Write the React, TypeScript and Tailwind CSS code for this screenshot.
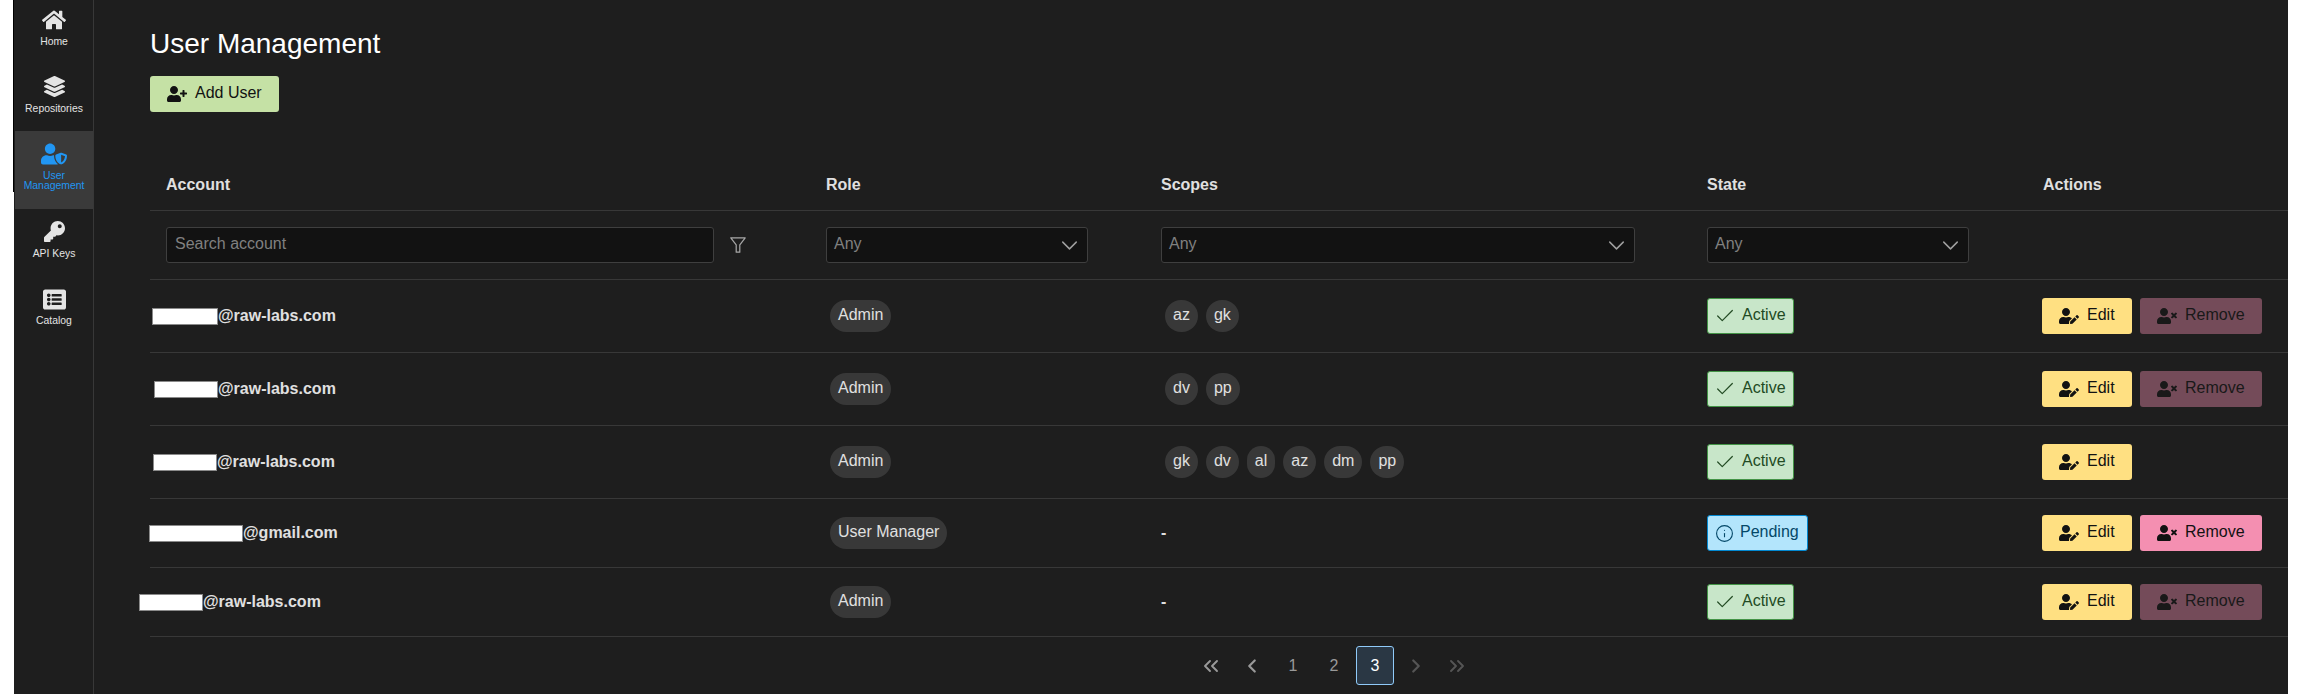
import { Check, ChevronDown, ChevronLeft, ChevronRight, ChevronsLeft, ChevronsRight, Info } from "lucide-react";
import { FaHome, FaKey, FaLayerGroup, FaListAlt, FaUserEdit, FaUserPlus, FaUserShield, FaUserTimes } from "react-icons/fa";

const gridCols = "grid grid-cols-[660px_335px_546px_336px_261px] items-center border-b border-[#383838]";

const users = [
  { mask: "w-[66px] -ml-[14px]", domain: "@raw-labs.com", role: "Admin", scopes: ["az", "gk"], state: "Active", removable: false, tall: true },
  { mask: "w-[64px] -ml-[12px]", domain: "@raw-labs.com", role: "Admin", scopes: ["dv", "pp"], state: "Active", removable: false, tall: true },
  { mask: "w-[64px] -ml-[13px]", domain: "@raw-labs.com", role: "Admin", scopes: ["gk", "dv", "al", "az", "dm", "pp"], state: "Active", removable: null, tall: true },
  { mask: "w-[94px] -ml-[17px]", domain: "@gmail.com", role: "User Manager", scopes: [], state: "Pending", removable: true, tall: false },
  { mask: "w-[64px] -ml-[27px]", domain: "@raw-labs.com", role: "Admin", scopes: [], state: "Active", removable: false, tall: false },
];

const navItems = [
  { label: "Home", icon: <FaHome size={24} /> },
  { label: "Repositories", icon: <FaLayerGroup size={21} /> },
  { label: "User Management", icon: <FaUserShield size={26} />, active: true },
  { label: "API Keys", icon: <FaKey size={21} /> },
  { label: "Catalog", icon: <FaListAlt size={23} className="translate-y-px" /> },
];

const Sidebar = () => (
  <aside className="w-[80px] shrink-0 overflow-hidden border-r border-[#383838] pl-px">
    <div className="-mt-[3px]">
      {navItems.map((item) => (
        <div
          key={item.label}
          className={
            item.active
              ? "flex h-[78px] flex-col items-center bg-[#3a3a3a] pt-3 text-[#2196f3]"
              : "flex h-[67px] flex-col items-center pt-3 text-[#e4e4e4]"
          }
        >
          <div className="flex h-[21px] items-center justify-center">{item.icon}</div>
          <p className="mt-[7px] text-center text-[10.4px] leading-[10px]">{item.label}</p>
        </div>
      ))}
    </div>
  </aside>
);

const Dropdown = ({ width }: { width: string }) => (
  <div className={`flex h-9 items-center justify-between rounded-[3px] border border-[#3f3f3f] bg-[#121212] pl-[7px] pr-[4px] text-[#808080] ${width}`}>
    <span className="-translate-y-px">Any</span>
    <ChevronDown size={27} strokeWidth={1.3} className="text-[#a0a0a0]" />
  </div>
);

const Chip = ({ label }: { label: string }) => (
  <span className="m-1 flex h-8 items-center rounded-full bg-[#383838] px-2 text-[#e0e0e0]">
    <span className="-translate-y-px">{label}</span>
  </span>
);

const StateTag = ({ state }: { state: string }) =>
  state === "Active" ? (
    <div className="flex h-9 w-[87px] items-center gap-[6px] rounded-[3px] border border-[#439446] bg-[#c8e6c9] pl-[6px] text-[#224a23]">
      <Check size={22} strokeWidth={1.3} />
      <span className="-translate-y-px">Active</span>
    </div>
  ) : (
    <div className="flex h-9 w-[101px] items-center gap-[6px] rounded-[3px] border border-[#0288d1] bg-[#b3e5fc] pl-[7px] text-[#044868]">
      <Info size={19} strokeWidth={1.4} />
      <span className="-translate-y-px">Pending</span>
    </div>
  );

const PageButton = ({ children, active }: { children: React.ReactNode; active?: boolean }) => (
  <button
    className={
      active
        ? "flex h-[39px] w-[38px] items-center justify-center rounded-[3px] border border-[#90caf9] bg-[#2a3744] text-white"
        : "flex h-[39px] w-[38px] items-center justify-center text-[#999999]"
    }
  >
    {children}
  </button>
);

export default function App() {
  return (
    <div className="flex h-[694px] w-[2300px] overflow-hidden bg-white font-['Liberation_Sans',sans-serif] text-base text-[#e0e0e0]">
      <div className="w-[14px] shrink-0">
        <div className="ml-auto h-[192px] w-px bg-black" />
      </div>
      <div className="flex w-[2274px] bg-[#1e1e1e]">
        <Sidebar />
        <main className="flex-1 pl-[56px] pt-[27px]">
          <h1 className="text-[28px] leading-[33px] text-white">User Management</h1>
          <button className="mt-4 flex h-9 w-[129px] items-center gap-2 rounded-[3px] bg-[#c5e1a5] pl-[17px] text-[#121212]">
            <FaUserPlus size={20} />
            <span className="-translate-y-px">Add User</span>
          </button>

          <div className="mt-[46px]">
            <div className={`${gridCols} h-[53px] pt-[2px] font-bold`}>
              <div className="pl-4">Account</div>
              <div className="pl-4">Role</div>
              <div className="pl-4">Scopes</div>
              <div className="pl-4">State</div>
              <div className="pl-4">Actions</div>
            </div>

            <div className={`${gridCols} h-[69px]`}>
              <div className="flex items-center pl-4">
                <input
                  placeholder="Search account"
                  className="h-9 w-[548px] rounded-[3px] border border-[#3f3f3f] bg-[#121212] px-2 pb-0.5 text-[#e0e0e0] outline-none placeholder:text-[#808080]"
                />
                <svg viewBox="0 0 16 16" className="ml-4 size-4" fill="none" stroke="#a8a8a8" strokeWidth="1.2">
                  <path d="M0.8 0.8h14.4L9.8 7.8v7.4H6.2V7.8z" strokeLinejoin="round" />
                </svg>
              </div>
              <div className="pl-4"><Dropdown width="w-[262px]" /></div>
              <div className="pl-4"><Dropdown width="w-[474px]" /></div>
              <div className="pl-4"><Dropdown width="w-[262px]" /></div>
              <div />
            </div>

            {users.map((user, i) => (
              <div key={i} className={`${gridCols} ${user.tall ? "h-[73px]" : "h-[69px]"}`}>
                <div className="flex items-center pl-4 font-bold">
                  <span className={`h-[17px] border border-[#8a8a8a] bg-white ${user.mask}`} />
                  <span>{user.domain}</span>
                </div>
                <div className="flex pl-4">
                  <Chip label={user.role} />
                </div>
                <div className="flex pl-4">
                  {user.scopes.length > 0 ? (
                    user.scopes.map((scope) => <Chip key={scope} label={scope} />)
                  ) : (
                    <span className="font-bold">-</span>
                  )}
                </div>
                <div className="pl-4">
                  <StateTag state={user.state} />
                </div>
                <div className="flex gap-2 pl-[15px] text-[#121212]">
                  <button className="flex h-9 w-[90px] items-center gap-2 rounded-[3px] bg-[#ffe082] pl-[17px]">
                    <FaUserEdit size={20} />
                    <span className="-translate-y-px">Edit</span>
                  </button>
                  {user.removable !== null && (
                    <button
                      className={
                        user.removable
                          ? "flex h-9 w-[122px] items-center gap-2 rounded-[3px] bg-[#f48fb1] pl-[17px]"
                          : "flex h-9 w-[122px] items-center gap-2 rounded-[3px] bg-[#f48fb1] pl-[17px] opacity-40"
                      }
                    >
                      <FaUserTimes size={20} />
                      <span className="-translate-y-px">Remove</span>
                    </button>
                  )}
                </div>
              </div>
            ))}

            <div className="flex gap-[3px] pl-[1042px] pt-[9px]">
              <PageButton><ChevronsLeft size={24} strokeWidth={1.9} /></PageButton>
              <PageButton><ChevronLeft size={22} strokeWidth={2.4} /></PageButton>
              <PageButton>1</PageButton>
              <PageButton>2</PageButton>
              <PageButton active>3</PageButton>
              <PageButton><ChevronRight size={22} strokeWidth={2.4} className="text-[#555555]" /></PageButton>
              <PageButton><ChevronsRight size={24} strokeWidth={1.9} className="text-[#555555]" /></PageButton>
            </div>
          </div>
        </main>
      </div>
    </div>
  );
}
